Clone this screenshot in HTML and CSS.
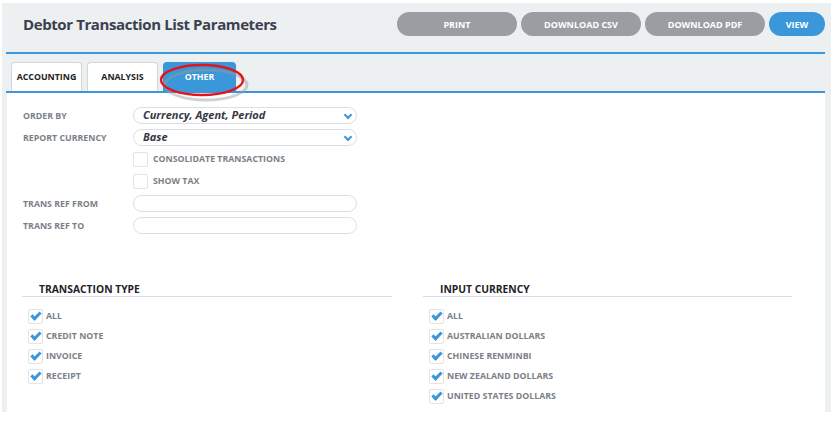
FILE: index.html
```html
<!DOCTYPE html>
<html>
<head>
    <title>Debtor Transaction List Parameters</title>
    <link rel="stylesheet" href="styles.css">
</head>
<body>

<div class="page">
    <div class="header">
        <h1 class="title">Debtor Transaction List Parameters</h1>
        <div class="actions">
            <button class="btn grey btn-wide">PRINT</button>
            <button class="btn grey btn-wide">DOWNLOAD CSV</button>
            <button class="btn grey btn-wide">DOWNLOAD PDF</button>
            <button class="btn blue">VIEW</button>
        </div>
    </div>

    <div class="tabs">
        <div class="tab">ACCOUNTING</div>
        <div class="tab">ANALYSIS</div>
        <div class="tab active">OTHER</div>
        <!-- annotation ring around the active tab -->
        <svg class="ring" width="100" height="44" viewBox="0 0 100 44">
            <ellipse cx="48" cy="21" rx="41" ry="15" fill="none" stroke="#999" stroke-width="3" opacity="0.45" transform="translate(2,3)"/>
            <ellipse cx="46" cy="19" rx="41" ry="15" fill="none" stroke="#e3141b" stroke-width="2.4"/>
        </svg>
    </div>

    <div class="content">
        <div class="form">
            <div class="label">ORDER BY</div>
            <div class="select">Currency, Agent, Period<span class="chev"></span></div>

            <div class="label">REPORT CURRENCY</div>
            <div class="select">Base<span class="chev"></span></div>

            <div class="label"></div>
            <div class="check"><span class="box"></span>CONSOLIDATE TRANSACTIONS</div>

            <div class="label"></div>
            <div class="check"><span class="box"></span>SHOW TAX</div>

            <div class="label">TRANS REF FROM</div>
            <div class="input"></div>

            <div class="label">TRANS REF TO</div>
            <div class="input"></div>
        </div>

        <div class="sections">
            <div class="section">
                <div class="section-title">TRANSACTION TYPE</div>
                <div class="item"><span class="box ticked"></span>ALL</div>
                <div class="item"><span class="box ticked"></span>CREDIT NOTE</div>
                <div class="item"><span class="box ticked"></span>INVOICE</div>
                <div class="item"><span class="box ticked"></span>RECEIPT</div>
            </div>
            <div class="section">
                <div class="section-title">INPUT CURRENCY</div>
                <div class="item"><span class="box ticked"></span>ALL</div>
                <div class="item"><span class="box ticked"></span>AUSTRALIAN DOLLARS</div>
                <div class="item"><span class="box ticked"></span>CHINESE RENMINBI</div>
                <div class="item"><span class="box ticked"></span>NEW ZEALAND DOLLARS</div>
                <div class="item"><span class="box ticked"></span>UNITED STATES DOLLARS</div>
            </div>
        </div>
    </div>
</div>

</body>
</html>
```

FILE: styles.css
```css
body {
    margin: 0;
    background: #fff;
    font-family: "Open Sans", "DejaVu Sans", sans-serif;
}
.page {
    margin: 3px 0 0 2px;
    width: 829px;
    height: 409px;
    background: #edf0f1;
    padding: 0 6px 0 5px;
    box-sizing: border-box;
    display: flex;
    flex-direction: column;
}
.header {
    height: 49px;
    display: flex;
    align-items: flex-start;
    justify-content: space-between;
    border-bottom: 2px solid #3a97da;
    margin-left: -1px;
}
.title {
    margin: 11px 0 0 17px;
    font-size: 15px;
    letter-spacing: -0.4px;
    font-weight: 700;
    color: #3b4050;
}
.actions {
    display: flex;
    gap: 4px;
    margin-top: 9px;
}
.btn {
    height: 24px;
    border: none;
    border-radius: 12px;
    color: #fff;
    font-family: inherit;
    font-size: 9px;
    font-weight: 700;
    padding: 0;
}
.btn-wide {
    width: 120px;
}
.grey {
    background: #9a9ea2;
}
.blue {
    background: #3a97da;
    width: 56px;
}
.tabs {
    height: 37px;
    display: flex;
    align-items: flex-end;
    gap: 5px;
    padding-left: 5px;
    border-bottom: 2px solid #3a97da;
    margin-left: -1px;
    position: relative;
}
.tab {
    width: 71px;
    height: 29px;
    box-sizing: border-box;
    background: #fff;
    border: 1px solid #d3d6d9;
    border-bottom: none;
    border-radius: 4px 4px 0 0;
    font-size: 8.8px;
    font-weight: 700;
    color: #222;
    display: flex;
    align-items: center;
    justify-content: center;
}
.tab.active {
    width: 73px;
    background: #3a97da;
    border-color: #3a97da;
    color: #fff;
}
.ring {
    position: absolute;
    left: 150px;
    top: 7px;
}
.content {
    flex: 1;
    background: #fff;
    padding: 11px 0 0 16px;
}
.form {
    display: grid;
    grid-template-columns: 110px 224px;
    grid-auto-rows: 22px;
    align-items: center;
}
.label {
    padding-top: 2px;
    font-size: 8.8px;
    font-weight: 700;
    color: #7b7f87;
}
.select, .input {
    height: 17px;
    box-sizing: border-box;
    border: 1px solid #dcdfe2;
    border-radius: 9px;
    position: relative;
}
.select {
    padding-left: 9px;
    font-size: 11px;
    font-weight: 700;
    font-style: italic;
    color: #343844;
    line-height: 14px;
}
.chev {
    position: absolute;
    right: 5px;
    top: 4px;
    width: 4px;
    height: 4px;
    border-right: 2px solid #3a97da;
    border-bottom: 2px solid #3a97da;
    transform: rotate(45deg);
}
.check {
    display: flex;
    align-items: center;
    gap: 5px;
    font-size: 8.8px;
    font-weight: 700;
    color: #7b7f87;
}
.box {
    width: 15px;
    height: 15px;
    box-sizing: border-box;
    border: 1px solid #e2e4e6;
    border-radius: 2px;
    background: #fff;
    position: relative;
    flex-shrink: 0;
}
.box.ticked::after {
    content: "";
    position: absolute;
    left: 2px;
    top: 2px;
    width: 7px;
    height: 3px;
    border-left: 3px solid #3a97da;
    border-bottom: 3px solid #3a97da;
    transform: rotate(-45deg);
}
.sections {
    display: grid;
    grid-template-columns: 370px 369px;
    gap: 31px;
    margin: 46px 0 0 -1px;
}
.section-title {
    padding-left: 17px;
    font-size: 10.3px;
    font-weight: 700;
    color: #1f2228;
    line-height: 14px;
    border-bottom: 1px solid #dcdcec;
    margin-bottom: 9px;
}
.item {
    height: 20px;
    display: flex;
    align-items: center;
    gap: 3px;
    padding-left: 6px;
    font-size: 8.8px;
    font-weight: 700;
    color: #7b7f87;
}
```
